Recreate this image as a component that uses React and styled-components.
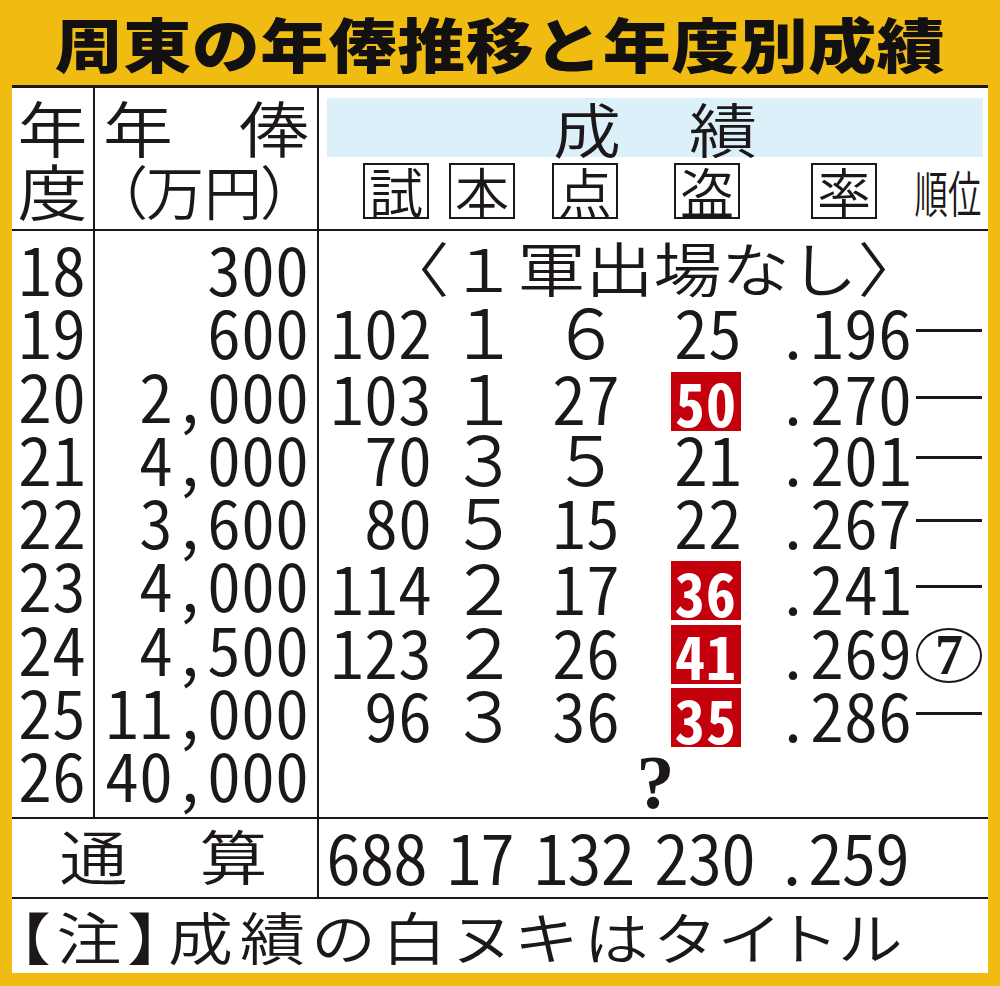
import React from 'react';
import styled, { createGlobalStyle } from 'styled-components';

const INK = '#1c1718';
const GOLD = '#f0bc12';
const RED = '#c5000d';
const SKY = '#dcf0fa';

const GlobalStyle = createGlobalStyle`
  html, body {
    margin: 0;
    padding: 0;
    background: ${GOLD};
  }
  body {
    font-family: "Noto Sans CJK JP", "Noto Sans", sans-serif;
    color: ${INK};
  }
`;

const seasons = [
  { year: '18', pay: '300', absent: true },
  { year: '19', pay: '600', g: '102', hr: '１', pts: '６', sb: '25', avg: '.196', rank: '―' },
  { year: '20', pay: '2,000', g: '103', hr: '１', pts: '27', sb: '50', title: true, avg: '.270', rank: '―' },
  { year: '21', pay: '4,000', g: '70', hr: '３', pts: '５', sb: '21', avg: '.201', rank: '―' },
  { year: '22', pay: '3,600', g: '80', hr: '５', pts: '15', sb: '22', avg: '.267', rank: '―' },
  { year: '23', pay: '4,000', g: '114', hr: '２', pts: '17', sb: '36', title: true, avg: '.241', rank: '―' },
  { year: '24', pay: '4,500', g: '123', hr: '２', pts: '26', sb: '41', title: true, avg: '.269', rank: 7 },
  { year: '25', pay: '11,000', g: '96', hr: '３', pts: '36', sb: '35', title: true, avg: '.286', rank: '―' },
  { year: '26', pay: '40,000', unknown: true },
];

const labels = [
  { text: '試', mr: 3 },
  { text: '本', mr: 3 },
  { text: '点', mr: 2 },
  { text: '盗', mr: 2 },
  { text: '率', mr: 35 },
];

const totals = ['688', '17', '132', '230', '.259'];

const isWide = (s) => /[０-９]/.test(s);

const StatTable = () => {
  return (
    <>
      <GlobalStyle />
      <Frame>
        <Title>
          <Flat>周東の年俸推移と年度別成績</Flat>
        </Title>
        <Panel>
          <HeadRow>
            <HeadCell $divider>
              <HeadLine><Flat>年</Flat></HeadLine>
              <HeadLine><Flat>度</Flat></HeadLine>
            </HeadCell>
            <HeadCell $divider>
              <SpreadLine>
                <Flat>年</Flat>
                <Flat>俸</Flat>
              </SpreadLine>
              <UnitLine>（万円）</UnitLine>
            </HeadCell>
            <StatsHead>
              <Band>
                <Flat>成　績</Flat>
              </Band>
              <StatGrid>
                {labels.map((l) => (
                  <LabelBox key={l.text} $mr={l.mr}>{l.text}</LabelBox>
                ))}
                <RankLabel><span>順位</span></RankLabel>
              </StatGrid>
            </StatsHead>
          </HeadRow>

          <Body>
            <Column $divider>
              {seasons.map((s) => (
                <YearLine key={s.year}><Num>{s.year}</Num></YearLine>
              ))}
            </Column>
            <Column $divider>
              {seasons.map((s) => (
                <PayLine key={s.year}><Num>{s.pay}</Num></PayLine>
              ))}
            </Column>
            <Column>
              {seasons.map((s) => {
                if (s.absent) {
                  return (
                    <StatGrid key={s.year} $row>
                      <Notice><Flat>〈１軍出場なし〉</Flat></Notice>
                    </StatGrid>
                  );
                }
                if (s.unknown) {
                  return (
                    <StatGrid key={s.year} $row>
                      <Question>?</Question>
                    </StatGrid>
                  );
                }
                return (
                  <StatGrid key={s.year} $row>
                    {[s.g, s.hr, s.pts].map((v, i) => (
                      <StatCell key={i}>
                        <Num $wide={isWide(v)}>{v}</Num>
                      </StatCell>
                    ))}
                    <StatCell>
                      {s.title ? <TitleMark>{s.sb}</TitleMark> : <Num>{s.sb}</Num>}
                    </StatCell>
                    <StatCell><Num>{s.avg}</Num></StatCell>
                    <RankCell>
                      {typeof s.rank === 'number' ? <Circled>{s.rank}</Circled> : <Dash aria-label="―" />}
                    </RankCell>
                  </StatGrid>
                );
              })}
            </Column>
          </Body>

          <TotalRow>
            <TotalLabel $divider><Flat>通　算</Flat></TotalLabel>
            <TotalStats>
              {totals.map((t) => (
                <TotalNum key={t}>{t}</TotalNum>
              ))}
            </TotalStats>
          </TotalRow>

          <Note>
            <Flat>【注】成績の白ヌキはタイトル</Flat>
          </Note>
        </Panel>
      </Frame>
    </>
  );
};

export default StatTable;

const Frame = styled.div`
  width: 1000px;
  height: 986px;
  box-sizing: border-box;
  padding: 0 12px 13px;
  background: ${GOLD};
  display: flex;
  flex-direction: column;
`;

const Flat = styled.span`
  display: inline-block;
  transform: scaleY(0.87);
  white-space: nowrap;
`;

const Title = styled.h1`
  margin: 0;
  height: 85px;
  display: flex;
  align-items: center;
  justify-content: center;
  font-size: 68px;
  line-height: 1;
  font-weight: 900;
  letter-spacing: 0.5px;
  color: #121011;
`;

const Panel = styled.div`
  flex: 1;
  min-width: 0;
  background: #fff;
  border-top: 3px solid ${INK};
  display: flex;
  flex-direction: column;
  overflow: hidden;
`;

const HeadRow = styled.div`
  display: grid;
  grid-template-columns: 83px 224px minmax(0, 1fr);
  height: 143px;
  box-sizing: border-box;
  border-bottom: 2px solid ${INK};
`;

const HeadCell = styled.div`
  display: flex;
  flex-direction: column;
  justify-content: center;
  border-right: ${({ $divider }) => ($divider ? `2px solid ${INK}` : 'none')};
  font-size: 70px;
  font-weight: 350;
  line-height: 1;
`;

const HeadLine = styled.div`
  height: 63px;
  display: flex;
  align-items: center;
  justify-content: center;
`;

const SpreadLine = styled.div`
  height: 63px;
  display: flex;
  align-items: center;
  justify-content: space-between;
  padding: 0 8px;
`;

const UnitLine = styled.div`
  height: 63px;
  display: flex;
  align-items: center;
  justify-content: center;
  font-size: 58px;
  font-feature-settings: "palt" 1;
  padding-right: 4px;
`;

const StatsHead = styled.div`
  min-width: 0;
  padding: 10px 5px 0 8px;
  display: flex;
  flex-direction: column;
`;

const Band = styled.div`
  height: 59px;
  background: ${SKY};
  display: flex;
  align-items: center;
  justify-content: center;
  font-size: 68px;
  font-weight: 350;
  line-height: 1;
`;

const StatGrid = styled.div`
  display: grid;
  grid-template-columns: 113px 86px 102px 122px 170px minmax(0, 1fr);
  align-items: center;
  height: ${({ $row }) => ($row ? '63.3px' : 'auto')};
  margin: ${({ $row }) => ($row ? '0' : '6px -5px 0 -8px')};
`;

const LabelBox = styled.div`
  justify-self: end;
  margin-right: ${({ $mr }) => $mr}px;
  width: 66px;
  height: 56px;
  box-sizing: border-box;
  border: 2px solid ${INK};
  display: flex;
  align-items: center;
  justify-content: center;
  font-size: 54px;
  line-height: 1;
  font-weight: 350;
`;

const RankLabel = styled.div`
  min-width: 0;
  height: 56px;
  display: flex;
  align-items: center;
  justify-content: center;
  margin-right: 4px;
  font-size: 53px;
  line-height: 1;
  font-weight: 350;

  span {
    flex: none;
    display: inline-block;
    white-space: nowrap;
    transform: scaleX(0.63) scaleY(0.95);
  }
`;

const Body = styled.div`
  display: grid;
  grid-template-columns: 83px 224px minmax(0, 1fr);
  height: 588px;
  box-sizing: border-box;
  border-bottom: 2px solid ${INK};
`;

const Column = styled.div`
  min-width: 0;
  padding-top: 4px;
  border-right: ${({ $divider }) => ($divider ? `2px solid ${INK}` : 'none')};
  font-size: 68px;
  font-weight: 350;
`;

const Num = styled.span`
  font-feature-settings: ${({ $wide }) => ($wide ? 'normal' : '"hwid" 1')};
  white-space: nowrap;
`;

const YearLine = styled.div`
  height: 63.3px;
  line-height: 63.3px;
  text-align: center;
  padding-right: 1px;
`;

const PayLine = styled.div`
  height: 63.3px;
  line-height: 63.3px;
  text-align: right;
  padding-right: 8px;
`;

const StatCell = styled.div`
  line-height: 63.3px;
  display: flex;
  justify-content: flex-end;
  align-items: center;
`;

const RankCell = styled.div`
  display: flex;
  justify-content: center;
  align-items: center;
  padding-right: 2px;
`;

const Dash = styled.span`
  display: block;
  width: 66px;
  height: 3px;
  margin-top: 2px;
  background: ${INK};
`;

const Notice = styled.div`
  grid-column: 1 / -1;
  text-align: center;
  line-height: 63.3px;
`;

const Question = styled.div`
  grid-column: 1 / -1;
  text-align: center;
  font-family: "Liberation Serif", serif;
  font-weight: 700;
  font-size: 76px;
  line-height: 63.3px;
  padding: 10px 0 0 4px;
`;

const TitleMark = styled.span`
  display: inline-flex;
  align-items: center;
  justify-content: center;
  width: 70px;
  height: 59px;
  margin: 10px 1px 0 0;
  background: ${RED};
  color: #fff;
  font-weight: 700;
  font-size: 60px;
  line-height: 1;
  letter-spacing: 1px;
  font-feature-settings: "hwid" 1;
`;

const Circled = styled.span`
  display: inline-flex;
  align-items: center;
  justify-content: center;
  width: 66px;
  height: 55px;
  margin-top: 12px;
  box-sizing: border-box;
  border: 2px solid ${INK};
  border-radius: 50%;
  font-family: "Liberation Serif", serif;
  font-weight: 700;
  font-size: 56px;
  line-height: 1;
`;

const TotalRow = styled.div`
  display: grid;
  grid-template-columns: 307px minmax(0, 1fr);
  height: 80px;
  box-sizing: border-box;
  border-bottom: 2px solid ${INK};
`;

const TotalLabel = styled.div`
  display: flex;
  align-items: center;
  justify-content: center;
  border-right: 2px solid ${INK};
  font-size: 68px;
  font-weight: 350;
  line-height: 1;
  letter-spacing: 2px;
  padding-bottom: 6px;
`;

const TotalStats = styled.div`
  display: flex;
  align-items: center;
  gap: 20px;
  padding: 0 0 6px 7px;
`;

const TotalNum = styled.span`
  font-size: 70px;
  font-weight: 350;
  line-height: 1;
  letter-spacing: -1.5px;
  font-feature-settings: "hwid" 1;
`;

const Note = styled.div`
  flex: 1;
  display: flex;
  align-items: center;
  padding-left: 5px;
  font-size: 65px;
  font-weight: 350;
  line-height: 1;
  letter-spacing: 7px;
  font-feature-settings: "palt" 1;
`;
